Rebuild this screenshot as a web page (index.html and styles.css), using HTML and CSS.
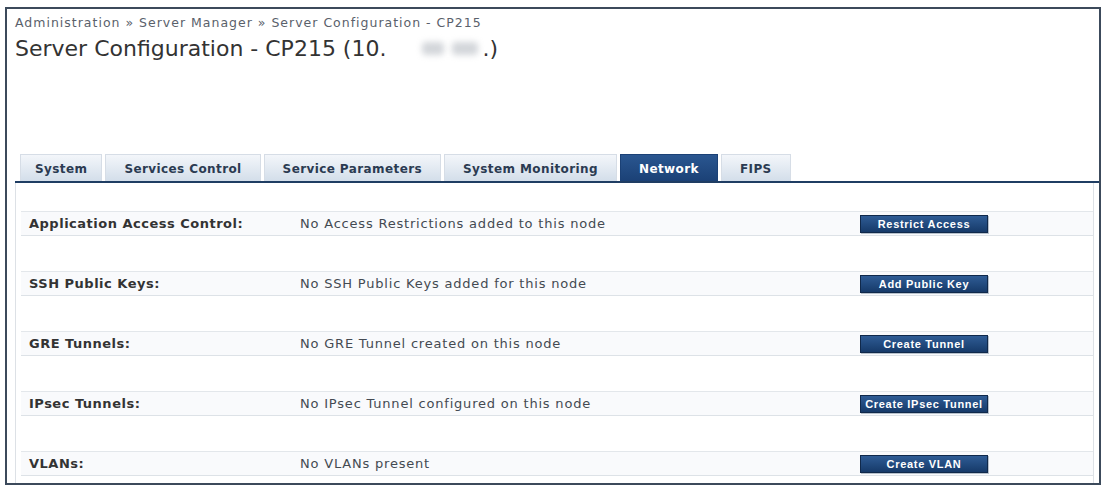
FILE: index.html
```html
<!DOCTYPE html>
<html>
<head>
<meta charset="utf-8">
<link rel="stylesheet" href="styles.css">
</head>
<body>
<div class="frame">
  <div class="breadcrumb">Administration » Server Manager » Server Configuration - CP215</div>
  <h1 class="title">Server Configuration - CP215 (10.<span class="masked" aria-label="hidden address"><span class="blob b1"></span><span class="blob b2"></span></span>.)</h1>
  <div class="tabs">
    <div class="tab narrow">System</div>
    <div class="tab">Services Control</div>
    <div class="tab">Service Parameters</div>
    <div class="tab">System Monitoring</div>
    <div class="tab active">Network</div>
    <div class="tab">FIPS</div>
  </div>
  <div class="panel">
    <div class="row">
      <div class="label">Application Access Control:</div>
      <div class="value">No Access Restrictions added to this node</div>
      <div class="btn">Restrict Access</div>
    </div>
    <div class="row">
      <div class="label">SSH Public Keys:</div>
      <div class="value">No SSH Public Keys added for this node</div>
      <div class="btn">Add Public Key</div>
    </div>
    <div class="row">
      <div class="label">GRE Tunnels:</div>
      <div class="value">No GRE Tunnel created on this node</div>
      <div class="btn">Create Tunnel</div>
    </div>
    <div class="row">
      <div class="label">IPsec Tunnels:</div>
      <div class="value">No IPsec Tunnel configured on this node</div>
      <div class="btn">Create IPsec Tunnel</div>
    </div>
    <div class="row">
      <div class="label">VLANs:</div>
      <div class="value">No VLANs present</div>
      <div class="btn">Create VLAN</div>
    </div>
  </div>
</div>
</body>
</html>
```

FILE: styles.css
```css
html, body {
  margin: 0;
  padding: 0;
  background: #ffffff;
}
body {
  font-family: "DejaVu Sans", Verdana, sans-serif;
}
.frame {
  box-sizing: border-box;
  margin: 7px 5px 0 5px;
  width: 1096px;
  height: 478px;
  border: 2px solid #3c4a5b;
  padding: 6px 5px 0 8px;
  display: flex;
  flex-direction: column;
}
.breadcrumb {
  font-size: 12.5px;
  line-height: 16px;
  letter-spacing: 1px;
  color: #5a616b;
}
.title {
  margin: 5px 0 0 0;
  font-size: 22px;
  line-height: 26px;
  font-weight: normal;
  color: #333333;
}
.masked {
  display: inline-block;
  position: relative;
  width: 96px;
  height: 20px;
  vertical-align: -2px;
}
.blob {
  position: absolute;
  top: 4px;
  height: 13px;
  background: #d3d6da;
  filter: blur(3px);
  border-radius: 4px;
}
.b1 { left: 36px; width: 22px; }
.b2 { left: 66px; width: 26px; }
.tabs {
  margin-top: 92px;
  margin-right: -5px;
  display: flex;
  gap: 3px;
  padding-left: 5px;
  border-bottom: 2px solid #1f3d63;
}
.tab {
  height: 27px;
  line-height: 29px;
  padding: 0 18px;
  font-size: 12px;
  letter-spacing: 0.4px;
  font-weight: bold;
  color: #2b3b52;
  background: linear-gradient(#f3f6fa, #d3deea);
  border: 1px solid #d6dde6;
  border-bottom: none;
  box-sizing: border-box;
}
.tab.narrow {
  padding: 0 14px;
}
.tab.active {
  background: linear-gradient(#2a5690, #1b4176);
  border-color: #1b4176;
  color: #ffffff;
}
.panel {
  flex: 1;
  border-left: 1px solid #dde1e6;
  border-right: 1px solid #dde1e6;
  padding: 28px 0 0 5px;
  display: flex;
  flex-direction: column;
  gap: 35px;
}
.row {
  height: 25px;
  box-sizing: border-box;
  display: flex;
  align-items: center;
  padding-left: 8px;
  background: #f9fafc;
  border-top: 1px solid #e3e7eb;
  border-bottom: 1px solid #dde2e7;
}
.label {
  width: 271px;
  font-size: 13px;
  letter-spacing: 0.5px;
  font-weight: bold;
  color: #333333;
}
.value {
  width: 560px;
  font-size: 13px;
  letter-spacing: 0.8px;
  color: #444a52;
}
.btn {
  width: 128px;
  height: 18px;
  box-sizing: border-box;
  line-height: 17px;
  text-align: center;
  font-family: "Liberation Sans", Arial, sans-serif;
  font-size: 11px;
  letter-spacing: 0.7px;
  font-weight: bold;
  white-space: nowrap;
  color: #ffffff;
  background: linear-gradient(#2f5c95, #163a69);
  border: 1px solid #10294b;
  box-shadow: 1px 1px 0 #b7c1cc;
}
```
